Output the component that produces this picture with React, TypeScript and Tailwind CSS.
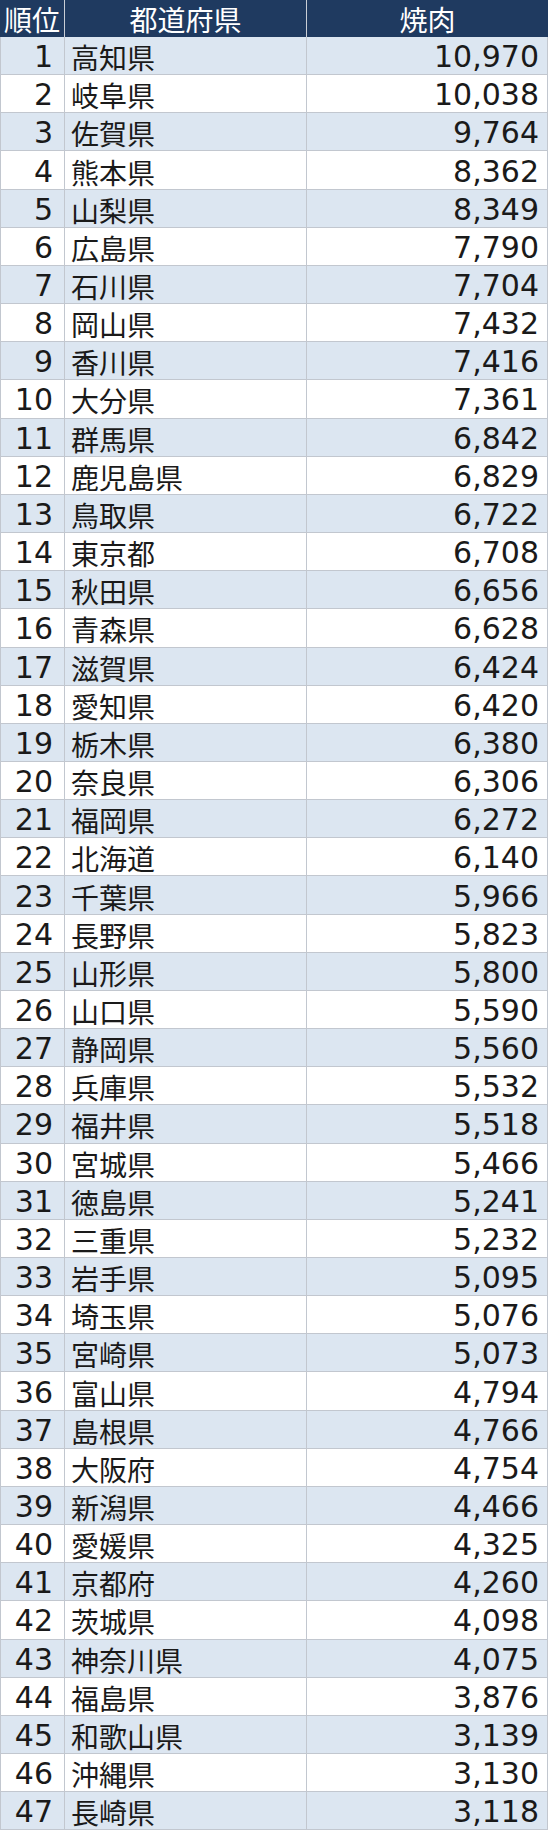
const rows: [string, string][] = [
  ["高知県", "10,970"],
  ["岐阜県", "10,038"],
  ["佐賀県", "9,764"],
  ["熊本県", "8,362"],
  ["山梨県", "8,349"],
  ["広島県", "7,790"],
  ["石川県", "7,704"],
  ["岡山県", "7,432"],
  ["香川県", "7,416"],
  ["大分県", "7,361"],
  ["群馬県", "6,842"],
  ["鹿児島県", "6,829"],
  ["鳥取県", "6,722"],
  ["東京都", "6,708"],
  ["秋田県", "6,656"],
  ["青森県", "6,628"],
  ["滋賀県", "6,424"],
  ["愛知県", "6,420"],
  ["栃木県", "6,380"],
  ["奈良県", "6,306"],
  ["福岡県", "6,272"],
  ["北海道", "6,140"],
  ["千葉県", "5,966"],
  ["長野県", "5,823"],
  ["山形県", "5,800"],
  ["山口県", "5,590"],
  ["静岡県", "5,560"],
  ["兵庫県", "5,532"],
  ["福井県", "5,518"],
  ["宮城県", "5,466"],
  ["徳島県", "5,241"],
  ["三重県", "5,232"],
  ["岩手県", "5,095"],
  ["埼玉県", "5,076"],
  ["宮崎県", "5,073"],
  ["富山県", "4,794"],
  ["島根県", "4,766"],
  ["大阪府", "4,754"],
  ["新潟県", "4,466"],
  ["愛媛県", "4,325"],
  ["京都府", "4,260"],
  ["茨城県", "4,098"],
  ["神奈川県", "4,075"],
  ["福島県", "3,876"],
  ["和歌山県", "3,139"],
  ["沖縄県", "3,130"],
  ["長崎県", "3,118"],
];

const cjk = "font-['Noto_Sans_CJK_JP',sans-serif]";
const num = "font-['DejaVu_Sans','Noto_Sans_CJK_JP',sans-serif]";

export default function App() {
  return (
    <div className="w-[550px] bg-white">
      <div className="grid w-[548px] grid-cols-[65px_242px_241px]">
        {/* header */}
        <div className={`flex h-[37px] items-center justify-center border-r border-[#c9ced6] bg-[#1f3a60] text-[28px] leading-none text-white ${cjk}`}>
          順位
        </div>
        <div className={`flex h-[37px] items-center justify-center border-r border-[#c9ced6] bg-[#1f3a60] text-[28px] leading-none text-white ${cjk}`}>
          都道府県
        </div>
        <div className={`flex h-[37px] items-center justify-center bg-[#1f3a60] text-[28px] leading-none text-white ${cjk}`}>
          焼肉
        </div>

        {rows.map(([pref, val], i) => {
          const bg = i % 2 === 0 ? "bg-[#dce6f1]" : "bg-white";
          return (
            <div key={pref} className="contents">
              <div className={`flex h-[38.17px] items-center justify-end border-b border-l border-r border-[#c2c7cf] pr-[11px] pt-[3px] text-[30px] leading-none text-[#1a1a1a] ${bg} ${num}`}>
                {i + 1}
              </div>
              <div className={`flex h-[38.17px] items-center border-b border-r border-[#c2c7cf] pl-[6px] pt-[3px] text-[28px] leading-none text-[#1a1a1a] ${bg} ${cjk}`}>
                {pref}
              </div>
              <div className={`flex h-[38.17px] items-center justify-end border-b border-r border-[#c2c7cf] pr-[8px] pt-[3px] text-[30px] leading-none text-[#1a1a1a] ${bg} ${num}`}>
                {val}
              </div>
            </div>
          );
        })}
      </div>
    </div>
  );
}
